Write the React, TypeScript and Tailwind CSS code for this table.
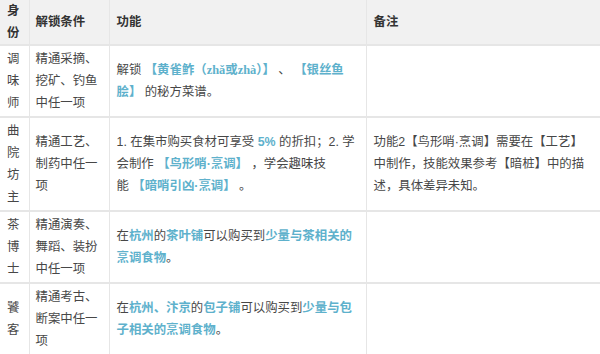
import React from 'react';

const Hl = ({ children }: { children: React.ReactNode }) => (
    <span className="font-bold text-[#5eb1cc]">{children}</span>
);

const Serif = ({ children }: { children: React.ReactNode }) => (
    <span style={{ fontFamily: '"Liberation Serif", "Noto Sans CJK SC", serif' }}>{children}</span>
);

const rows = [
    {
        role: '调味师',
        cond: '精通采摘、挖矿、钓鱼中任一项',
        func: (
            <>
                解锁 <Hl>【黄雀鲊（<Serif>zhǎ或zhà</Serif>）】</Hl> 、 <Hl>【银丝鱼脍】</Hl> 的秘方菜谱。
            </>
        ),
        note: '',
    },
    {
        role: '曲院坊主',
        cond: '精通工艺、制药中任一项',
        func: (
            <>
                1. 在集市购买食材可享受 <Hl>5%</Hl> 的折扣；2. 学会制作 <Hl>【鸟形哨·烹调】</Hl> ，学会趣味技能{'\u00a0'}<Hl>【暗哨引凶·烹调】</Hl> 。
            </>
        ),
        note: '功能2【鸟形哨·烹调】需要在【工艺】中制作，技能效果参考【暗桩】中的描述，具体差异未知。',
    },
    {
        role: '茶博士',
        cond: '精通演奏、舞蹈、装扮中任一项',
        func: (
            <>
                在<Hl>杭州</Hl>的<Hl>茶叶铺</Hl>可以购买到<Hl>少量与茶相关的烹调食物</Hl>。
            </>
        ),
        note: '',
    },
    {
        role: '饕客',
        cond: '精通考古、断案中任一项',
        func: (
            <>
                在<Hl>杭州、汴京</Hl>的<Hl>包子铺</Hl>可以购买到<Hl>少量与包子相关的烹调食物</Hl>。
            </>
        ),
        note: '',
    },
];

export default function App() {
    return (
        <div
            className="w-[600px] h-[354px] overflow-hidden bg-white text-[12.4px] leading-[22px] text-[#474747]"
            style={{ fontFamily: '"Liberation Sans", "Noto Sans CJK SC", sans-serif' }}
        >
            <table className="w-[600px] table-fixed border-collapse">
                <colgroup>
                    <col className="w-[29px]" />
                    <col className="w-[80px]" />
                    <col className="w-[257px]" />
                    <col className="w-[234px]" />
                </colgroup>
                <thead>
                    <tr className="h-[45px] bg-[#f1f1f1] text-left font-bold text-[#333]">
                        <th className="px-[7px] py-0 border-r border-b-2 border-[#e6e6e6]">身份</th>
                        <th className="px-[6px] py-0 border-r border-b-2 border-[#e6e6e6]">解锁条件</th>
                        <th className="px-[7px] py-0 border-r border-b-2 border-[#e6e6e6]">功能</th>
                        <th className="px-[7px] py-0 border-b-2 border-[#e6e6e6]">备注</th>
                    </tr>
                </thead>
                <tbody>
                    {rows.map((row, i) => (
                        <tr key={i} className="align-middle">
                            <td className="px-[7px] py-[2px] border-r border-b-2 border-[#e6e6e6]">{row.role}</td>
                            <td className="px-[6px] py-[2px] border-r border-b-2 border-[#e6e6e6]">{row.cond}</td>
                            <td className="pl-[7px] pr-[4px] py-[2px] border-r border-b-2 border-[#e6e6e6]">{row.func}</td>
                            <td className="px-[7px] py-[2px] border-b-2 border-[#e6e6e6]">{row.note}</td>
                        </tr>
                    ))}
                </tbody>
            </table>
        </div>
    );
}
